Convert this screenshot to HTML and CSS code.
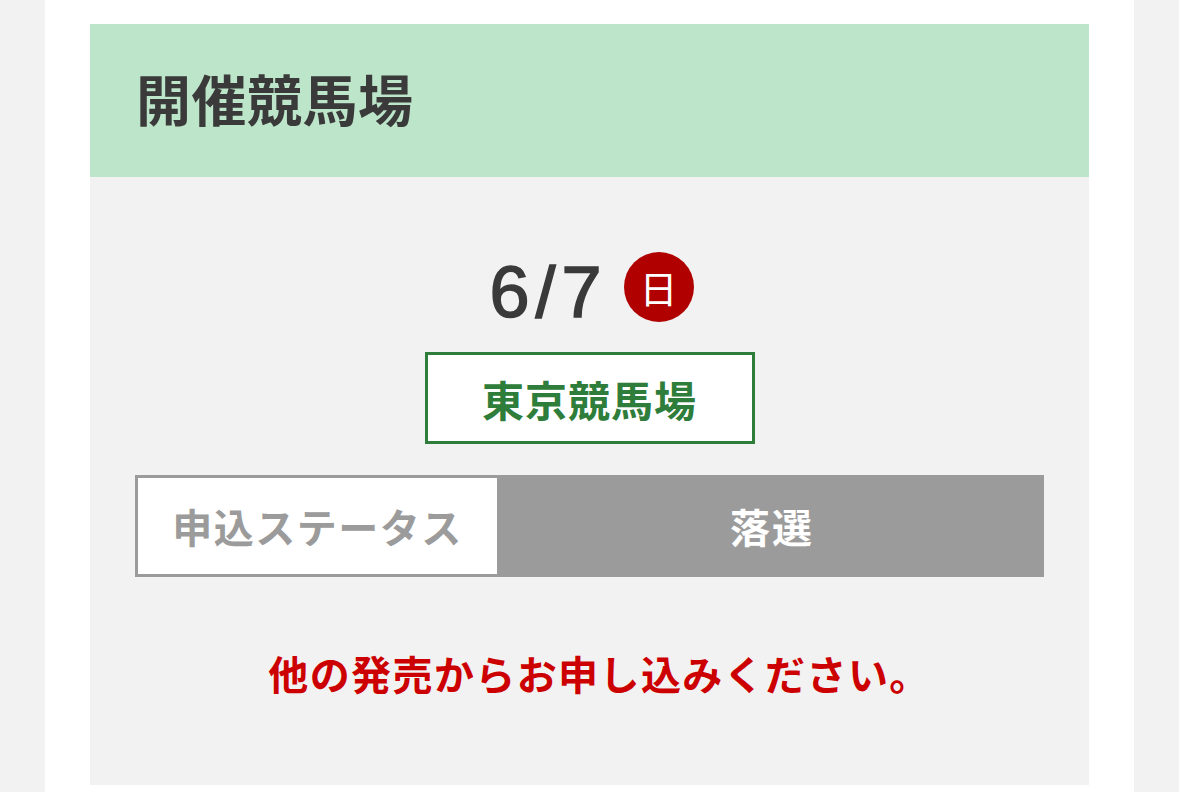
FILE: index.html
```html
<!DOCTYPE html>
<html lang="ja">
<head>
<meta charset="utf-8">
<link rel="stylesheet" href="styles.css">
</head>
<body>
<div class="page">
  <div class="card">
    <div class="card-head">
      <h2 class="title">開催競馬場</h2>
    </div>
    <div class="card-body">
      <div class="date-row">
        <span class="date">6/7</span>
        <span class="dow">日</span>
      </div>
      <div class="venue">東京競馬場</div>
      <div class="status">
        <div class="status-label">申込ステータス</div>
        <div class="status-value">落選</div>
      </div>
      <p class="notice">他の発売からお申し込みください。</p>
    </div>
  </div>
</div>
</body>
</html>
```

FILE: styles.css
```css
html, body {
  margin: 0;
  padding: 0;
  background: #f2f2f2;
}
body {
  font-family: "Noto Sans CJK JP", "Noto Sans", sans-serif;
}
.page {
  margin: 0 45px;
  background: #ffffff;
  padding: 24px 45px 0;
  min-height: 792px;
  box-sizing: border-box;
}
.card {
  background: #f2f2f2;
}
.card-head {
  background: #bce5c9;
  height: 153px;
  display: flex;
  align-items: center;
  padding-left: 46px;
}
.title {
  margin: 0;
  font-size: 55px;
  font-weight: 700;
  color: #3a3a3a;
  line-height: 1;
  letter-spacing: 0.5px;
  transform: translateY(-3px);
}
.card-body {
  height: 608px;
  padding: 78px 45px 0;
  box-sizing: border-box;
  display: flex;
  flex-direction: column;
  align-items: center;
}
.date-row {
  display: flex;
  align-items: center;
  gap: 16px;
  height: 70px;
  margin-left: 4px;
}
.date {
  font-family: "Liberation Sans", Arial, sans-serif;
  font-size: 72px;
  font-weight: 400;
  -webkit-text-stroke: 1.6px #3a3a3a;
  color: #3a3a3a;
  letter-spacing: 6px;
  line-height: 1;
  margin-top: 4px;
}
.dow {
  width: 70px;
  height: 70px;
  border-radius: 50%;
  background: #b00000;
  color: #ffffff;
  font-size: 38px;
  display: flex;
  align-items: center;
  justify-content: center;
  line-height: 1;
  margin-top: -6px;
}
.venue {
  margin-top: 27px;
  width: 330px;
  height: 92px;
  box-sizing: border-box;
  border: 3px solid #2e7d3a;
  background: #ffffff;
  color: #2e7d3a;
  font-size: 42px;
  font-weight: 700;
  display: flex;
  align-items: center;
  justify-content: center;
  letter-spacing: 1px;
}
.status {
  margin-top: 31px;
  align-self: stretch;
  display: flex;
  height: 102px;
}
.status-label {
  width: 365px;
  box-sizing: border-box;
  border: 3px solid #9b9b9b;
  background: #ffffff;
  color: #9b9b9b;
  font-size: 40px;
  font-weight: 700;
  display: flex;
  align-items: center;
  justify-content: center;
  letter-spacing: 1.5px;
}
.status-value {
  flex: 1;
  background: #9b9b9b;
  color: #ffffff;
  font-size: 40px;
  font-weight: 700;
  display: flex;
  align-items: center;
  justify-content: center;
  letter-spacing: 2px;
}
.notice {
  margin: 72px 0 0 20px;
  color: #cc0000;
  font-size: 40px;
  font-weight: 700;
  line-height: 1.2;
  letter-spacing: 1.4px;
}
```
